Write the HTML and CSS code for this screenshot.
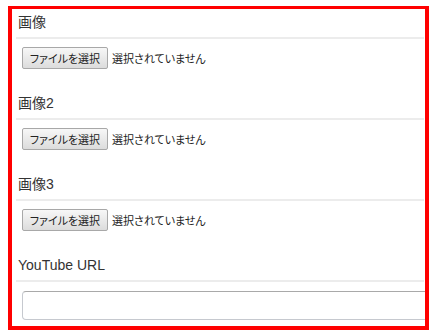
FILE: index.html
```html
<!DOCTYPE html>
<html lang="ja">
  <head>
    <meta charset="UTF-8">
    <meta name="viewport" content="width=device-width, initial-scale=1.0">
    <title>投稿フォーム</title>
    <link rel="stylesheet" href="styles.css">
  </head>
  <body>
    <div class="frame">
      <div class="field">
        <div class="field-label">画像</div>
        <div class="field-body">
          <label class="file-picker">
            <span class="file-button">ファイルを選択</span>
            <span class="file-status">選択されていません</span>
          </label>
        </div>
      </div>
      <div class="field">
        <div class="field-label">画像2</div>
        <div class="field-body">
          <label class="file-picker">
            <span class="file-button">ファイルを選択</span>
            <span class="file-status">選択されていません</span>
          </label>
        </div>
      </div>
      <div class="field">
        <div class="field-label">画像3</div>
        <div class="field-body">
          <label class="file-picker">
            <span class="file-button">ファイルを選択</span>
            <span class="file-status">選択されていません</span>
          </label>
        </div>
      </div>
      <div class="field">
        <div class="field-label">YouTube URL</div>
        <div class="field-body">
          <input type="text" class="url-input">
        </div>
      </div>
    </div>
  </body>
</html>
```

FILE: styles.css
```css
body {
  margin: 0;
  background: #fff;
  font-family: 'Liberation Sans', 'Noto Sans CJK JP', sans-serif;
  color: #333;
}

.frame {
  width: 421px;
  height: 324px;
  margin: 6px 0 0 8px;
  padding: 3px 1px 0 4px;
  box-sizing: border-box;
  border: 4px solid #ff0000;
  border-top-width: 3px;
  overflow: hidden;
}

.field {
  margin-bottom: 24px;
}

.field-label {
  font-size: 14px;
  line-height: 20px;
  padding: 0 2px 5px;
  border-bottom: 2px solid #ececec;
  color: #333;
}

.field-body {
  padding: 8px 0 0 6px;
}

.file-picker {
  display: flex;
  align-items: center;
  gap: 4px;
  font-size: 11px;
  font-feature-settings: "palt";
}

.file-button {
  display: flex;
  align-items: center;
  justify-content: center;
  width: 86px;
  height: 22px;
  box-sizing: border-box;
  border: 1px solid #a8a8a8;
  border-radius: 2px;
  background: linear-gradient(#f7f7f7, #dcdcdc);
  color: #222;
}

.file-status {
  color: #222;
}

.url-input {
  display: block;
  width: 420px;
  height: 29px;
  margin-top: 1px;
  box-sizing: border-box;
  border: 1px solid #c6c9cf;
  border-top-color: #a9a9a9;
  border-radius: 4px;
  background: #fff;
}
```
